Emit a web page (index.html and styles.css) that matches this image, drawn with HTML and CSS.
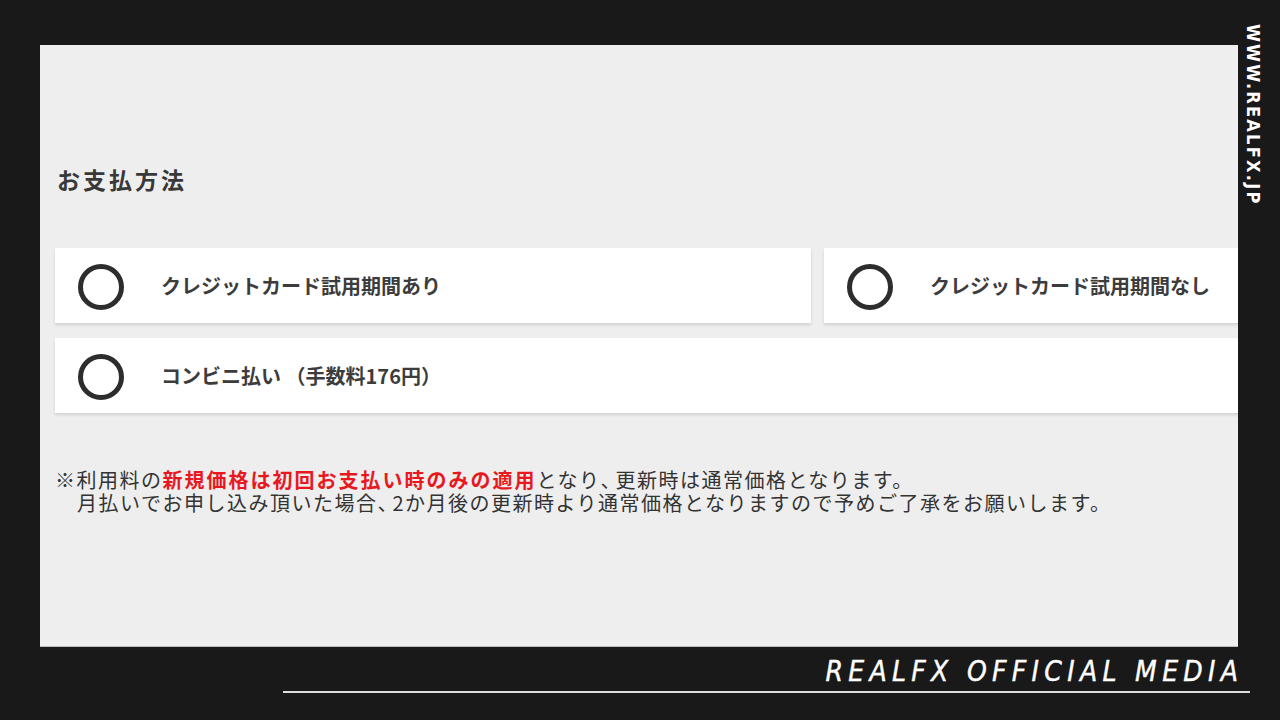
FILE: index.html
```html
<!DOCTYPE html>
<html lang="ja">
<head>
  <meta charset="UTF-8">
  <meta name="viewport" content="width=device-width, initial-scale=1.0">
  <title>お支払方法</title>
  <link rel="stylesheet" href="styles.css">
</head>
<body>

  <div class="frame">
    <div class="panel">
      <h2>お支払方法</h2>

      <div class="options">
        <label class="option">
          <span class="radio"></span>
          <span class="option-text">クレジットカード試用期間あり</span>
        </label>
        <label class="option">
          <span class="radio"></span>
          <span class="option-text">クレジットカード試用期間なし</span>
        </label>
        <label class="option wide">
          <span class="radio"></span>
          <span class="option-text">コンビニ払い （手数料176円）</span>
        </label>
      </div>

      <p class="note">※利用料の<b class="red">新規価格は初回お支払い時のみの適用</b>となり<span class="comma">、</span>更新時は通常価格となります。<br>月払いでお申し込み頂いた場合<span class="comma">、</span>2か月後の更新時より通常価格となりますので予めご了承をお願いします。</p>
    </div>

    <div class="side">WWW.REALFX.JP</div>

    <div class="footer">
      <div class="footer-title">REALFX OFFICIAL MEDIA</div>
    </div>
  </div>

</body>
</html>
```

FILE: styles.css
```css
body {
  margin: 0;
  background: #191919;
  font-family: "Noto Sans CJK JP", "Noto Sans", sans-serif;
  color: #333;
}
.frame {
  display: grid;
  grid-template-columns: 40px 1198px 42px;
  grid-template-rows: 45px 602px 73px;
  width: 1280px;
  height: 720px;
  overflow: hidden;
}
.panel {
  grid-column: 2;
  grid-row: 2;
  background: #eeeeee;
  padding: 117px 0 0 15px;
  overflow: hidden;
  border-bottom: 1px solid #bbb;
  box-sizing: border-box;
}
h2 {
  margin: 0;
  padding-left: 2px;
  font-size: 23px;
  line-height: 34px;
  font-weight: 700;
  letter-spacing: 3px;
  color: #383838;
}
.options {
  display: grid;
  grid-template-columns: 756px 756px;
  column-gap: 13px;
  row-gap: 15px;
  margin-top: 52px;
}
.option {
  display: flex;
  align-items: center;
  height: 75px;
  padding-left: 23px;
  background: white;
  box-shadow: 0 2px 3px rgba(0,0,0,0.12);
  cursor: pointer;
}
.option.wide {
  grid-column: 1 / 3;
}
.radio {
  width: 36px;
  height: 36px;
  border: 5px solid #2d2d2d;
  border-radius: 50%;
  flex-shrink: 0;
  margin-top: 2px;
}
.option-text {
  margin-left: 37px;
  font-size: 20px;
  font-weight: 700;
  color: #3c3c3c;
}
.note {
  margin: 55px 0 0;
  font-size: 20px;
  line-height: 23px;
  letter-spacing: 1.5px;
  padding-left: 22px;
  text-indent: -22px;
  color: #333;
}
.red {
  color: #e8191e;
  font-weight: 700;
  letter-spacing: 2px;
}
.comma {
  letter-spacing: -5px;
}
.side {
  grid-column: 3;
  grid-row: 1 / 3;
  writing-mode: vertical-rl;
  padding: 24px 16px 0 0;
  font-family: "DejaVu Sans Condensed", "DejaVu Sans", sans-serif;
  font-weight: 700;
  font-size: 18px;
  letter-spacing: 2.25px;
  color: white;
}
.footer {
  grid-column: 1 / 4;
  grid-row: 3;
  margin-left: 283px;
  width: 967px;
  border-bottom: 2px solid #ddd;
  height: 46px;
  box-sizing: border-box;
  padding-right: 12px;
  padding-top: 10px;
  text-align: right;
}
.footer-title {
  font-family: "DejaVu Sans Condensed", "DejaVu Sans", sans-serif;
  font-style: italic;
  font-weight: 400;
  font-size: 28px;
  line-height: 30px;
  letter-spacing: 5.3px;
  margin-right: -5.3px;
  color: white;
  -webkit-text-stroke: 0.4px white;
}
```
